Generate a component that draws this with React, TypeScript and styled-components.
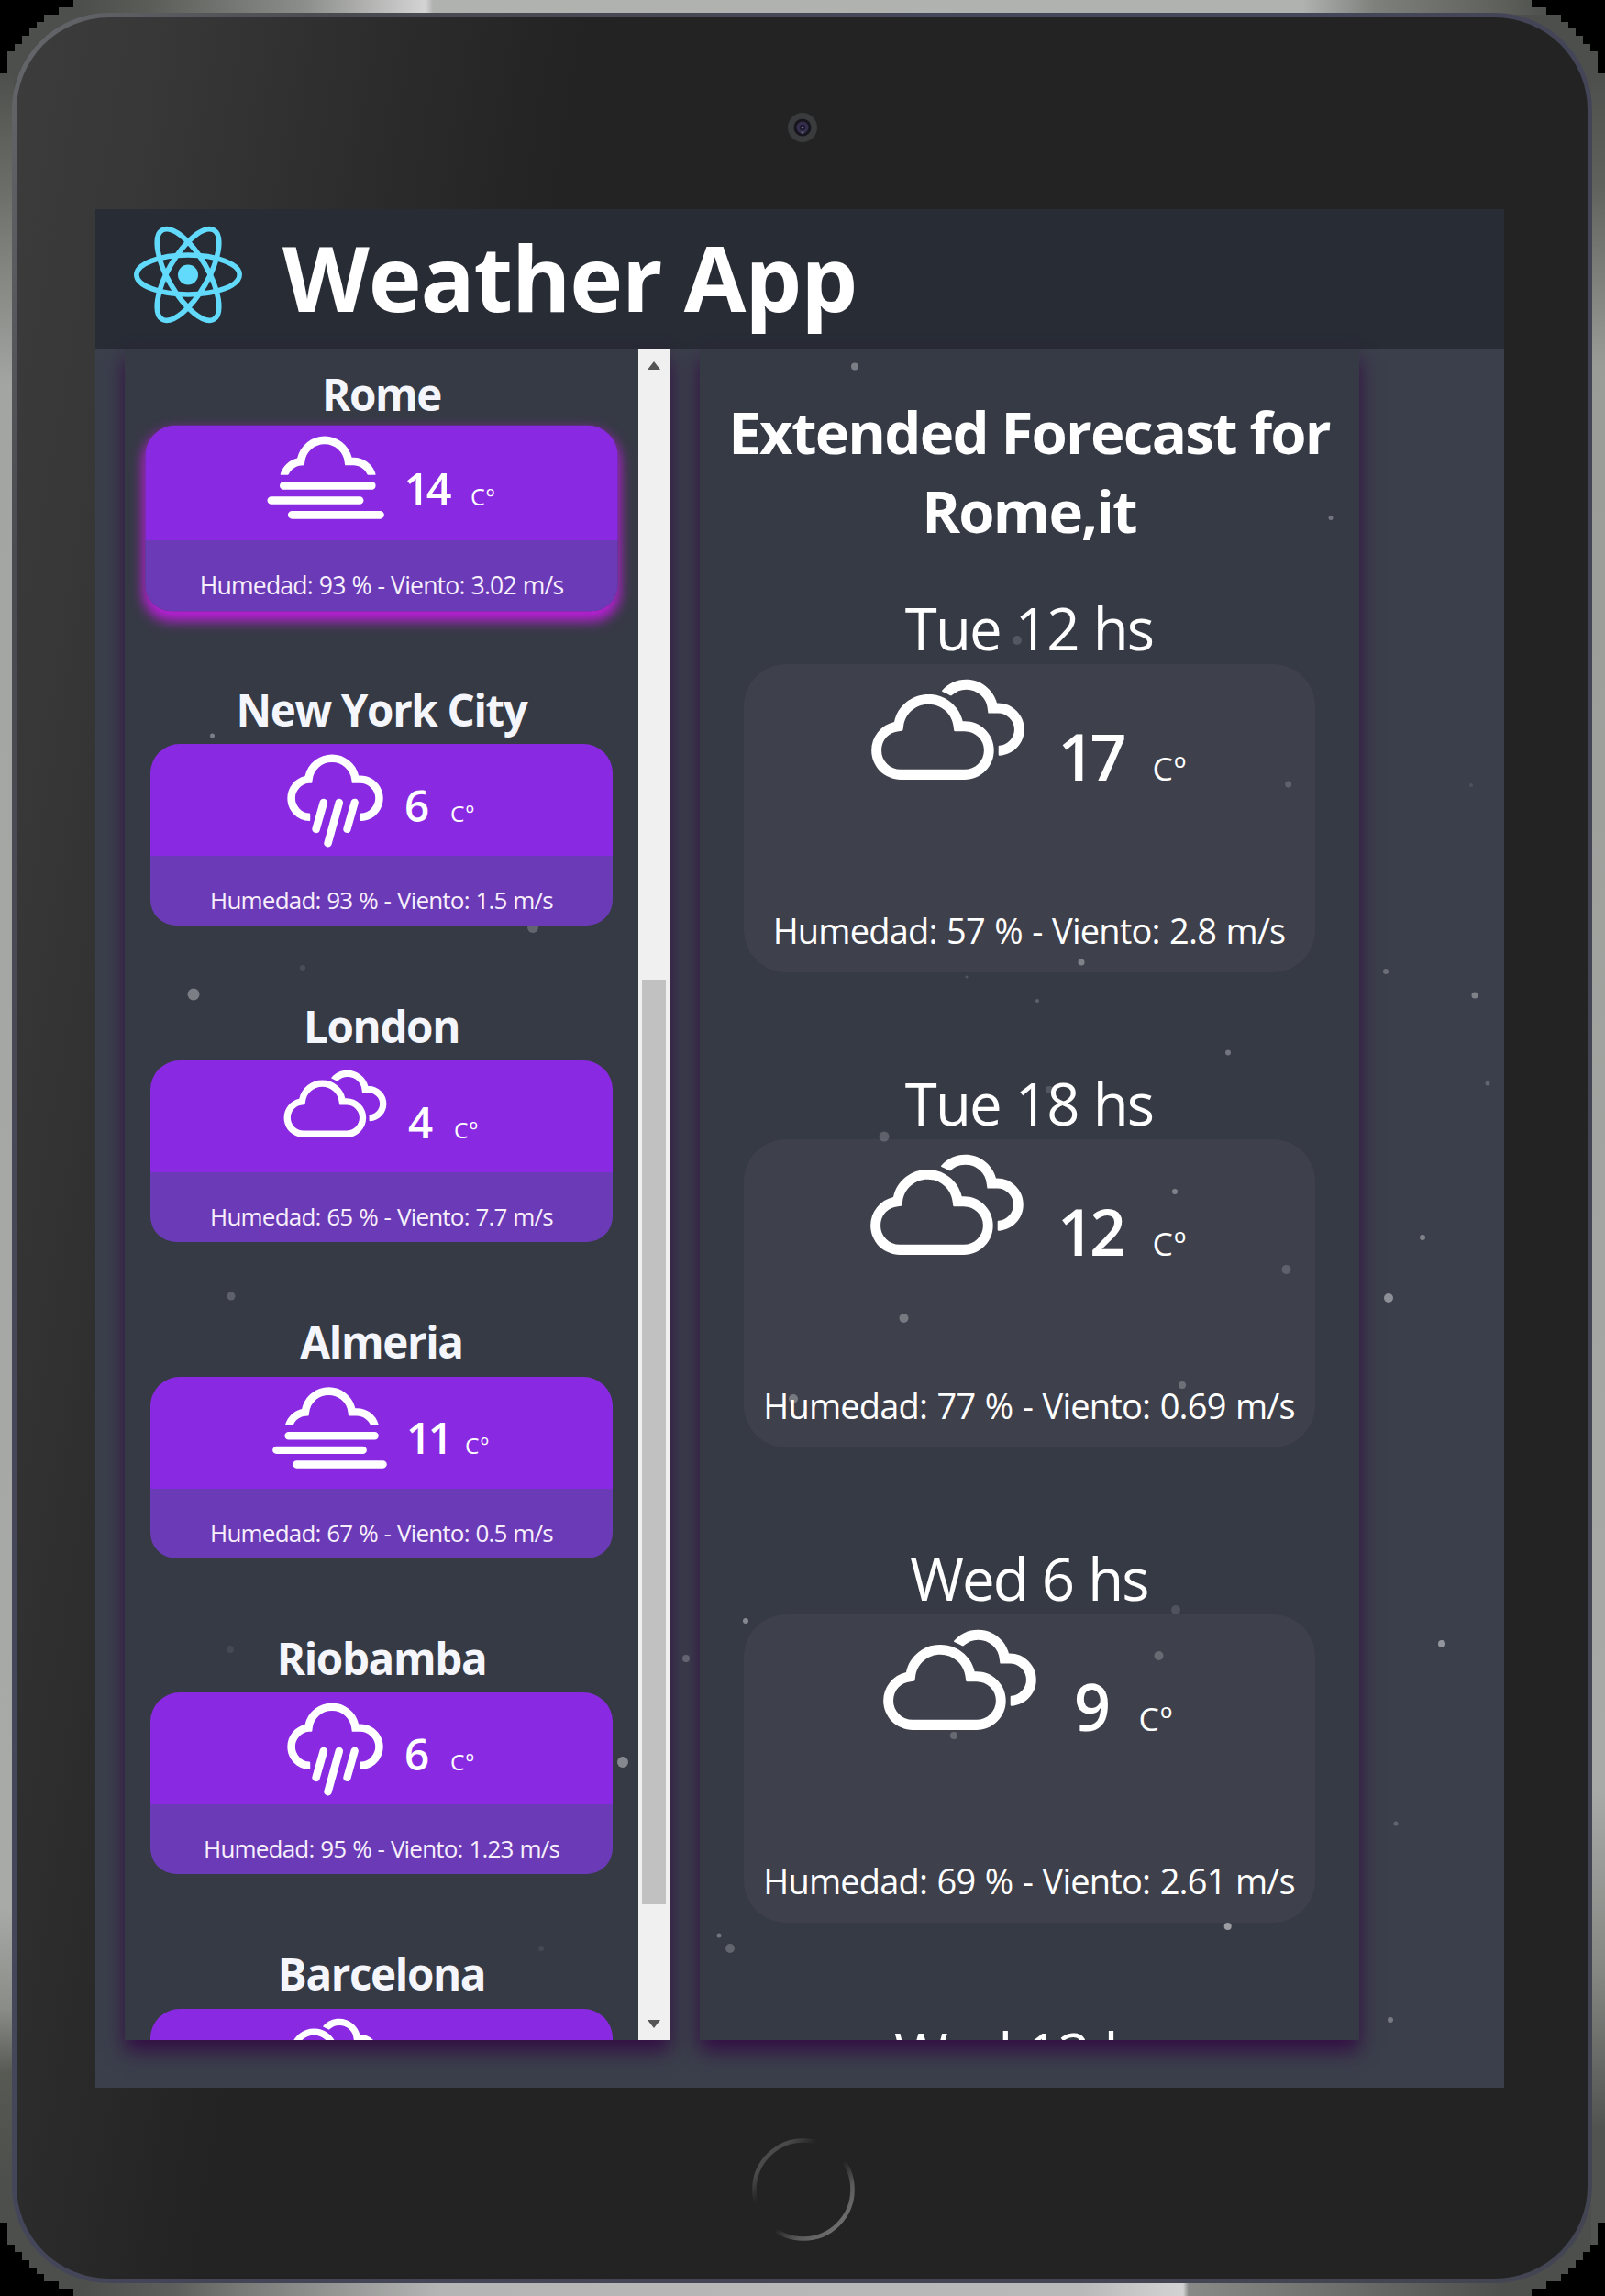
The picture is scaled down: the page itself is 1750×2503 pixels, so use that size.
import React from 'react';
import styled, { createGlobalStyle } from 'styled-components';
import { WiCloudy, WiFog, WiRain } from 'react-icons/wi';
import type { IconType } from 'react-icons';

const GlobalStyle = createGlobalStyle`
  * { box-sizing: border-box; }
  body { margin: 0; background: #000; }
  h1, h2, h3, p { margin: 0; }
`;

/* ---------- tablet ---------- */

const W = 1750;
const H = 2503;
const corner: [number, number][] = [
  [0, 80], [8, 80], [8, 56], [16, 56], [16, 48], [24, 48], [24, 39], [32, 39], [32, 31],
  [40, 31], [40, 24], [48, 24], [48, 16], [64, 16], [64, 8], [80, 8], [80, 0],
];
const outline = [
  ...corner,
  ...[...corner].reverse().map(([x, y]) => [W - x, y]),
  ...corner.map(([x, y]) => [W - x, H - y]),
  ...[...corner].reverse().map(([x, y]) => [x, H - y]),
].map(([x, y]) => `${x}px ${y}px`).join(', ');

const Frame = styled.div`
  width: ${W}px;
  height: ${H}px;
  padding: 14px 14px 14px 13px;
  font-family: 'Open Sans', 'Noto Sans', sans-serif;
  color: #fff;
  clip-path: polygon(${outline});
  background:
    linear-gradient(90deg, #4c4f4b00 90px, #5a5c58 160px, #8b8d8a 330px, #cfcfcf 455px, #d4d4d4 464px, #b0b2b0 472px, #b0b2b0 1420px, #7d807b 1500px, #5c5f5a 1640px, #4c4f4b00 1690px) 0 0 / 100% 16px no-repeat,
    linear-gradient(90deg, #4c4f4b00 90px, #5c5f5c 190px, #777977 260px, #b4b5b4 480px, #b8b9b8 1180px, #cfcfcf 1270px, #d2d2d2 1290px, #878a87 1296px, #6c6f6c 1460px, #4c4f4b00 1640px) 0 100% / 100% 16px no-repeat,
    linear-gradient(180deg, #5a5d5800 80px, #6a6d67 200px, #a3a5a2 420px, #a8aaa7 2080px, #8a8c88 2190px, #575953 2260px, #4c4f4b 2380px) 0 0 / 15px 100% no-repeat,
    linear-gradient(180deg, #5a5d5800 80px, #5f625c 200px, #9a9c98 400px, #a8aaa7 1950px, #858783 2150px, #50534f 2320px) 100% 0 / 15px 100% no-repeat,
    #4c4f4b;
`;

const Rim = styled.div`
  height: 100%;
  padding: 5px;
  border-radius: 106px;
  background: linear-gradient(120deg, #66686c 0, #4a4b50 300px, #44465a 900px, #434552 100%);
`;

const Bezel = styled.div`
  height: 100%;
  display: flex;
  flex-direction: column;
  border-radius: 101px;
  background: linear-gradient(99.9deg, #3c3c3c 0%, #373737 8%, #2b2b2b 20%, #222322 29%);
`;

const BezelTop = styled.div`
  height: 209px;
  flex: none;
  padding: 104px 0 0 841px;
`;

const BezelBottom = styled.div`
  flex: 1;
  padding: 53px 0 0 800px;
`;

const Screen = styled.main`
  position: relative;
  flex: none;
  width: 1536px;
  height: 2048px;
  margin-left: 86px;
  overflow: hidden;
  background: #3b3f4b;
`;

/* ---------- app ---------- */

const Header = styled.header`
  display: flex;
  align-items: center;
  height: 152px;
  padding-left: 42px;
  background: #282c35;
`;

const Title = styled.h1`
  margin: -4px 0 0 44px;
  font-size: 98px;
  line-height: 140px;
  font-weight: 700;
  letter-spacing: -1.1px;
`;

const Columns = styled.div`
  display: flex;
  gap: 32.5px;
  height: 1844px;
  padding-left: 32px;
`;

const Panel = styled.section<{ $width: number }>`
  display: flex;
  width: ${p => p.$width}px;
  height: 100%;
  overflow: hidden;
  background: #363a45;
  box-shadow: 0 12px 20px #330e45;
`;

const CityList = styled.div`
  width: 560px;
  padding: 18.5px 28px 0;
`;

const City = styled.article`
  height: 344.6px;
`;

const CityName = styled.h2`
  position: relative;
  z-index: 2;
  margin-bottom: 7.4px;
  padding-top: 1px;
  font-size: 47.5px;
  line-height: 60px;
  font-weight: 700;
  letter-spacing: -1.35px;
  text-align: center;
  color: #f4f6fb;
`;

const CityCard = styled.div<{ $active: boolean }>`
  position: relative;
  z-index: 2;
  height: 198px;
  border-radius: 32px 32px 28px 28px;
  background: linear-gradient(#8a29e2 122px, #6a3ab7 122px);
  transform: ${p => (p.$active ? 'translateY(-1px) scale(1.022)' : 'none')};
  box-shadow: ${p => (p.$active ? '0 8px 14px 2px #b91fd8' : 'none')};
`;

const Conditions = styled.div<{ $height: number; $lead: number }>`
  display: flex;
  align-items: flex-start;
  height: ${p => p.$height}px;
  padding-left: ${p => p.$lead}px;
`;

const Glyph = styled.span<{ $lift: number; $width: number }>`
  flex: none;
  width: ${p => p.$width}px;
  margin-top: -${p => p.$lift}px;
  svg { display: block; }
`;

const Reading = styled.div<{ $size: 'small' | 'large' }>`
  position: relative;
  z-index: 2;
  display: flex;
  align-items: baseline;
  padding-top: ${p => (p.$size === 'small' ? 36.5 : 55)}px;
  line-height: ${p => (p.$size === 'small' ? 60 : 90)}px;
`;

const Degrees = styled.strong<{ $size: 'small' | 'large'; $width: number }>`
  width: ${p => p.$width}px;
  font-size: ${p => (p.$size === 'small' ? 47.5 : 70)}px;
  font-weight: 600;
  letter-spacing: ${p => (p.$size === 'small' ? -3.4 : -5)}px;
`;

const Unit = styled.span<{ $size: 'small' | 'large' }>`
  font-size: ${p => (p.$size === 'small' ? 24.5 : 35.5)}px;
  font-weight: 500;
  letter-spacing: 1.2px;
`;

const CityDetail = styled.p`
  padding-top: 30px;
  font-size: 26px;
  line-height: 36px;
  letter-spacing: -0.8px;
  word-spacing: 0.8px;
  text-align: center;
  white-space: nowrap;
  color: #f8effc;
`;

const Scrollbar = styled.div`
  display: flex;
  flex-direction: column;
  align-items: center;
  justify-content: space-between;
  width: 34px;
  height: 100%;
  padding: 14px 0 13px;
  background: #f0f0f0;
  position: relative;
  z-index: 2;
`;

const Arrow = styled.span<{ $down?: boolean }>`
  border: 7px solid transparent;
  border-top-width: ${p => (p.$down ? '9px' : '0')};
  border-bottom-width: ${p => (p.$down ? '0' : '9px')};
  border-${p => (p.$down ? 'top' : 'bottom')}-color: #555;
`;

const Thumb = styled.span`
  width: 26px;
  height: 1008px;
  margin-top: 539px;
  background: #c1c1c1;
`;

const Forecast = styled.div`
  width: 100%;
  padding: 48px 48px 0;
  text-align: center;
`;

const ForecastTitle = styled.h2`
  position: relative;
  z-index: 2;
  margin: 0 -40px 45.4px;
  font-size: 63.5px;
  line-height: 86px;
  font-weight: 700;
  letter-spacing: -1.8px;
`;

const Slot = styled.article`
  height: 518px;
`;

const SlotTime = styled.h3`
  position: relative;
  z-index: 2;
  margin-bottom: -1px;
  font-size: 63.5px;
  line-height: 80px;
  font-weight: 400;
  letter-spacing: -1.9px;
  word-spacing: 1.5px;
`;

const SlotCard = styled.div`
  display: flex;
  flex-direction: column;
  justify-content: space-between;
  height: 336px;
  padding-bottom: 20px;
  border-radius: 46px;
  background: #3e404b;
`;

const SlotDetail = styled.p`
  position: relative;
  z-index: 2;
  font-size: 38px;
  line-height: 52px;
  letter-spacing: -0.8px;
  word-spacing: 1.3px;
  white-space: nowrap;
`;

const Snow = styled.svg`
  position: absolute;
  inset: 0;
  z-index: 1;
  pointer-events: none;
`;

const Logo = styled.svg`
  margin-top: -9px;
`;

/* ---------- data ---------- */

type Weather = { temp: number; humidity: number; wind: number; num: number };
type CityRow = { name: string; icon: IconType; lead: number; glyph: number; weather?: Weather; active?: boolean };
type SlotRow = { time: string; lead: number; glyph: number; weather?: Weather };

const cities: CityRow[] = [
  { name: 'Rome', icon: WiFog, lead: 117, glyph: 159, weather: { temp: 14, humidity: 93, wind: 3.02, num: 71 }, active: true },
  { name: 'New York City', icon: WiRain, lead: 126, glyph: 151, weather: { temp: 6, humidity: 93, wind: 1.5, num: 50 } },
  { name: 'London', icon: WiCloudy, lead: 126, glyph: 155, weather: { temp: 4, humidity: 65, wind: 7.7, num: 50 } },
  { name: 'Almeria', icon: WiFog, lead: 120, glyph: 159, weather: { temp: 11, humidity: 67, wind: 0.5, num: 64 } },
  { name: 'Riobamba', icon: WiRain, lead: 126, glyph: 151, weather: { temp: 6, humidity: 95, wind: 1.23, num: 50 } },
  { name: 'Barcelona', icon: WiCloudy, lead: 117, glyph: 154 },
];

const slots: SlotRow[] = [
  { time: 'Tue 12 hs', lead: 110, glyph: 200, weather: { temp: 17, humidity: 57, wind: 2.8, num: 136 } },
  { time: 'Tue 18 hs', lead: 109, glyph: 200, weather: { temp: 12, humidity: 77, wind: 0.69, num: 137 } },
  { time: 'Wed 6 hs', lead: 123, glyph: 202, weather: { temp: 9, humidity: 69, wind: 2.61, num: 106 } },
  { time: 'Wed 12 hs', lead: 110, glyph: 200 },
];

// x, y, radius, opacity
const flakes: [number, number, number, number][] = [
  [231.5, 802, 2.5, .35], [581, 1011, 6, .22], [330, 1055, 3, .1], [211, 1084, 6.5, .35], [252, 1413, 4.5, .2],
  [932, 399.5, 4, .35], [1451, 564.5, 2.5, .3], [1109, 698, 5, .15], [1404.7, 855, 3.5, .18], [1179, 1049, 3.5, .35],
  [1131, 1091, 2, .2], [1511, 1059, 3, .25], [1604, 856, 2, .1], [1608, 1085, 3.5, .35], [1339, 1147.5, 3, .3],
  [1622, 1181, 2.5, .2], [964, 1239, 5.5, .2], [1281, 1299, 3, .35], [1551, 1349, 3, .35], [1402.5, 1384, 5, .18],
  [1514, 1415, 5, .42], [985.5, 1437, 5, .3], [1289, 1510, 4, .25], [865, 1525, 5, .3], [813, 1767, 3, .4],
  [1282, 1755, 5, .13], [1263.5, 1805, 5, .22], [1572, 1792, 4, .45], [748, 1808, 4, .22], [1040, 1892, 4, .22],
  [1522, 1988, 2.5, .2], [679, 1921, 6, .4], [251, 1798, 4, .08], [1144, 1188, 4, .15], [1338.7, 2100, 4, .5],
  [784, 2110, 2.5, .3], [796, 2124, 5, .22], [1516, 2202, 3, .3], [590, 2124, 3, .08], [1054, 1065, 1.5, .15],
];

const detail = (w: Weather) => `Humedad: ${w.humidity} % - Viento: ${w.wind} m/s`;

function ReactLogo() {
  return (
    <Logo width="118" height="107" viewBox="-11.5 -10.4 23 20.8">
      <circle r="2.15" fill="#61dafb" />
      <g fill="none" stroke="#61dafb" strokeWidth="1.1">
        <ellipse rx="10.95" ry="4.2" />
        <ellipse rx="10.95" ry="4.2" transform="rotate(60)" />
        <ellipse rx="10.95" ry="4.2" transform="rotate(120)" />
      </g>
    </Logo>
  );
}

function Camera() {
  return (
    <svg width="32" height="32" viewBox="-16 -16 32 32">
      <circle r="16" fill="#3a3b3c" />
      <circle r="9.5" fill="#17161f" />
      <circle r="6.5" fill="#352f4c" />
      <circle r="3.2" fill="#1c1930" />
      <circle r="1.3" fill="#77738f" />
      <circle cy="5.5" r="1.6" fill="#5a5574" />
    </svg>
  );
}

function HomeButton() {
  return (
    <svg width="116" height="116" viewBox="-58 -58 116 116">
      <defs>
        <linearGradient id="home" x1="0" y1="0" x2="1" y2="1">
          <stop offset="0" stopColor="#4c4c4c" />
          <stop offset="0.18" stopColor="#4a4a4a" />
          <stop offset="0.32" stopColor="#4a4a4a" stopOpacity="0" />
          <stop offset="0.56" stopColor="#555" stopOpacity="0" />
          <stop offset="0.72" stopColor="#5a5a5a" />
          <stop offset="0.9" stopColor="#727272" />
        </linearGradient>
      </defs>
      <circle r="53.5" fill="none" stroke="url(#home)" strokeWidth="4.6" />
    </svg>
  );
}

function Temperature({ weather, size }: { weather: Weather; size: 'small' | 'large' }) {
  return (
    <Reading $size={size}>
      <Degrees $size={size} $width={weather.num}>{weather.temp}</Degrees>
      <Unit $size={size}>Cº</Unit>
    </Reading>
  );
}

export default function App() {
  return (
    <>
      <GlobalStyle />
      <Frame>
        <Rim>
          <Bezel>
            <BezelTop><Camera /></BezelTop>
            <Screen>
              <Header>
                <ReactLogo />
                <Title>Weather App</Title>
              </Header>
              <Columns>
                <Panel $width={594}>
                  <CityList>
                    {cities.map(c => (
                      <City key={c.name}>
                        <CityName>{c.name}</CityName>
                        <CityCard $active={!!c.active}>
                          <Conditions $height={122} $lead={c.lead}>
                            <Glyph $lift={26} $width={c.glyph}><c.icon size={151} /></Glyph>
                            {c.weather && <Temperature weather={c.weather} size="small" />}
                          </Conditions>
                          {c.weather && <CityDetail>{detail(c.weather)}</CityDetail>}
                        </CityCard>
                      </City>
                    ))}
                  </CityList>
                  <Scrollbar>
                    <Arrow />
                    <Thumb />
                    <Arrow $down />
                  </Scrollbar>
                </Panel>
                <Panel $width={719}>
                  <Forecast>
                    <ForecastTitle>Extended Forecast for<br />Rome,it</ForecastTitle>
                    {slots.map(s => (
                      <Slot key={s.time}>
                        <SlotTime>{s.time}</SlotTime>
                        <SlotCard>
                          <Conditions $height={200} $lead={s.lead}>
                            <Glyph $lift={38} $width={s.glyph}><WiCloudy size={225} /></Glyph>
                            {s.weather && <Temperature weather={s.weather} size="large" />}
                          </Conditions>
                          {s.weather && <SlotDetail>{detail(s.weather)}</SlotDetail>}
                        </SlotCard>
                      </Slot>
                    ))}
                  </Forecast>
                </Panel>
              </Columns>
              <Snow width="1536" height="2048" viewBox="104 228 1536 2048">
                {flakes.map(([x, y, r, o]) => (
                  <circle key={`${x}-${y}`} cx={x} cy={y} r={r} fill="#fff" opacity={o} />
                ))}
              </Snow>
            </Screen>
            <BezelBottom><HomeButton /></BezelBottom>
          </Bezel>
        </Rim>
      </Frame>
    </>
  );
}
